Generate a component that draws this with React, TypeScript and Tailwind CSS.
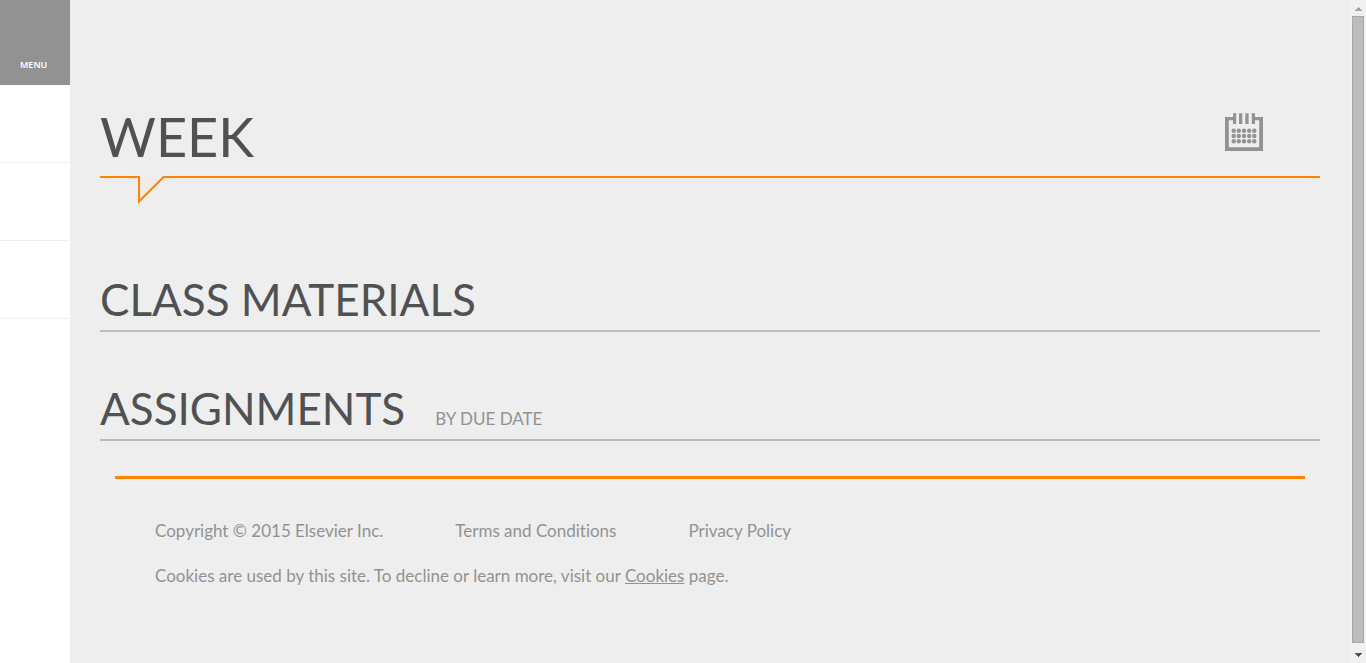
import React from "react";

const dotColumns = [8.7, 13.8, 19, 24.2, 29.3];
const dotRows = [17.8, 23, 28.2];

function CalendarIcon() {
  return (
    <svg width="38" height="38" viewBox="0 0 38 38" fill="#929292" aria-hidden="true">
      <path d="M0 4H8V0.3H11.2V11H8V7.3H3.8V34.3H34.2V7.3H30V11H26.8V0.3H30V4H38V38H0Z" />
      <rect x="14" y="0.3" width="3.3" height="10.7" />
      <rect x="20.3" y="0.3" width="3.3" height="10.7" />
      {dotRows.map((y) =>
        dotColumns.map((x) => <circle key={`${x}-${y}`} cx={x} cy={y} r="2.2" />),
      )}
    </svg>
  );
}

function SpeechRule() {
  return (
    <div className="flex h-7 items-start">
      <div className="h-0.5 w-[38px] bg-[#ff8200]" />
      <svg width="26" height="28" viewBox="0 0 26 28" aria-hidden="true">
        <path d="M0 1H1V25.5L25.5 1H26" fill="#eeede8" stroke="#ff8200" strokeWidth="2" />
      </svg>
      <div className="h-0.5 flex-1 bg-[#ff8200]" />
    </div>
  );
}

function Sidebar() {
  return (
    <nav className="w-[70px] shrink-0 bg-white" aria-label="Main">
      <button className="flex h-[85px] w-full items-end bg-[#929292] pb-3 pl-5 font-['Noto_Sans',sans-serif] text-[9px] leading-4 font-semibold text-white">
        MENU
      </button>
      <ul>
        <li className="h-[78px] border-b border-[#eeeeee]" />
        <li className="h-[78px] border-b border-[#eeeeee]" />
        <li className="h-[78px] border-b border-[#eeeeee]" />
      </ul>
    </nav>
  );
}

function ScrollTrack() {
  return (
    <div className="flex w-4 shrink-0 flex-col items-center bg-[#f1f1f1]">
      <button className="flex h-4 w-full items-center justify-center pt-0.5" aria-label="Scroll up">
        <svg width="7" height="4" viewBox="0 0 7 4" fill="#a3a3a3" shapeRendering="crispEdges">
          <path d="M3 0H4V1H5V2H6V3H7V4H0V3H1V2H2V1H3Z" />
        </svg>
      </button>
      <div className="w-3 flex-1 border border-[#a8a8a8] bg-[#bcbcbc]" />
      <button className="flex h-5 w-full items-center justify-center pt-1" aria-label="Scroll down">
        <svg width="7" height="4" viewBox="0 0 7 4" fill="#505050" shapeRendering="crispEdges">
          <path d="M0 0H7V1H6V2H5V3H4V4H3V3H2V2H1V1H0Z" />
        </svg>
      </button>
    </div>
  );
}

export default function App() {
  return (
    <div className="flex min-h-screen bg-[#eeeeee] font-['Lato','Open_Sans',sans-serif] text-[#505153] [font-variant-ligatures:none]">
      <Sidebar />
      <main className="min-w-0 flex-1 px-[30px] pt-[100px]">
        <header>
          <div className="flex h-[76px] items-start justify-between pr-[57px]">
            <h1 className="text-[54px] leading-[74px]">WEEK</h1>
            <button className="mt-[13px]" aria-label="Calendar">
              <CalendarIcon />
            </button>
          </div>
          <SpeechRule />
        </header>
        <section className="mt-[67px] border-b-2 border-[#bcbcb8] pb-[3px]">
          <h2 className="text-[44px] leading-[56px]">CLASS MATERIALS</h2>
        </section>
        <section className="mt-12 flex items-baseline gap-[30px] border-b-2 border-[#bcbcb8] pb-[3px]">
          <h2 className="text-[44px] leading-[56px]">ASSIGNMENTS</h2>
          <span className="text-[17px] text-[#929292]">BY DUE DATE</span>
        </section>
        <footer className="mx-[15px] mt-[35px] border-t-[3px] border-[#ff8200] px-10 pt-10 text-[17px] leading-6 text-[#929292]">
          <div className="flex gap-[72px]">
            <span>Copyright © 2015 Elsevier Inc.</span>
            <a href="#terms">Terms and Conditions</a>
            <a href="#privacy">Privacy Policy</a>
          </div>
          <p className="mt-[21px]">
            Cookies are used by this site. To decline or learn more, visit our{" "}
            <a href="#cookies" className="underline">Cookies</a> page.
          </p>
        </footer>
      </main>
      <ScrollTrack />
    </div>
  );
}
